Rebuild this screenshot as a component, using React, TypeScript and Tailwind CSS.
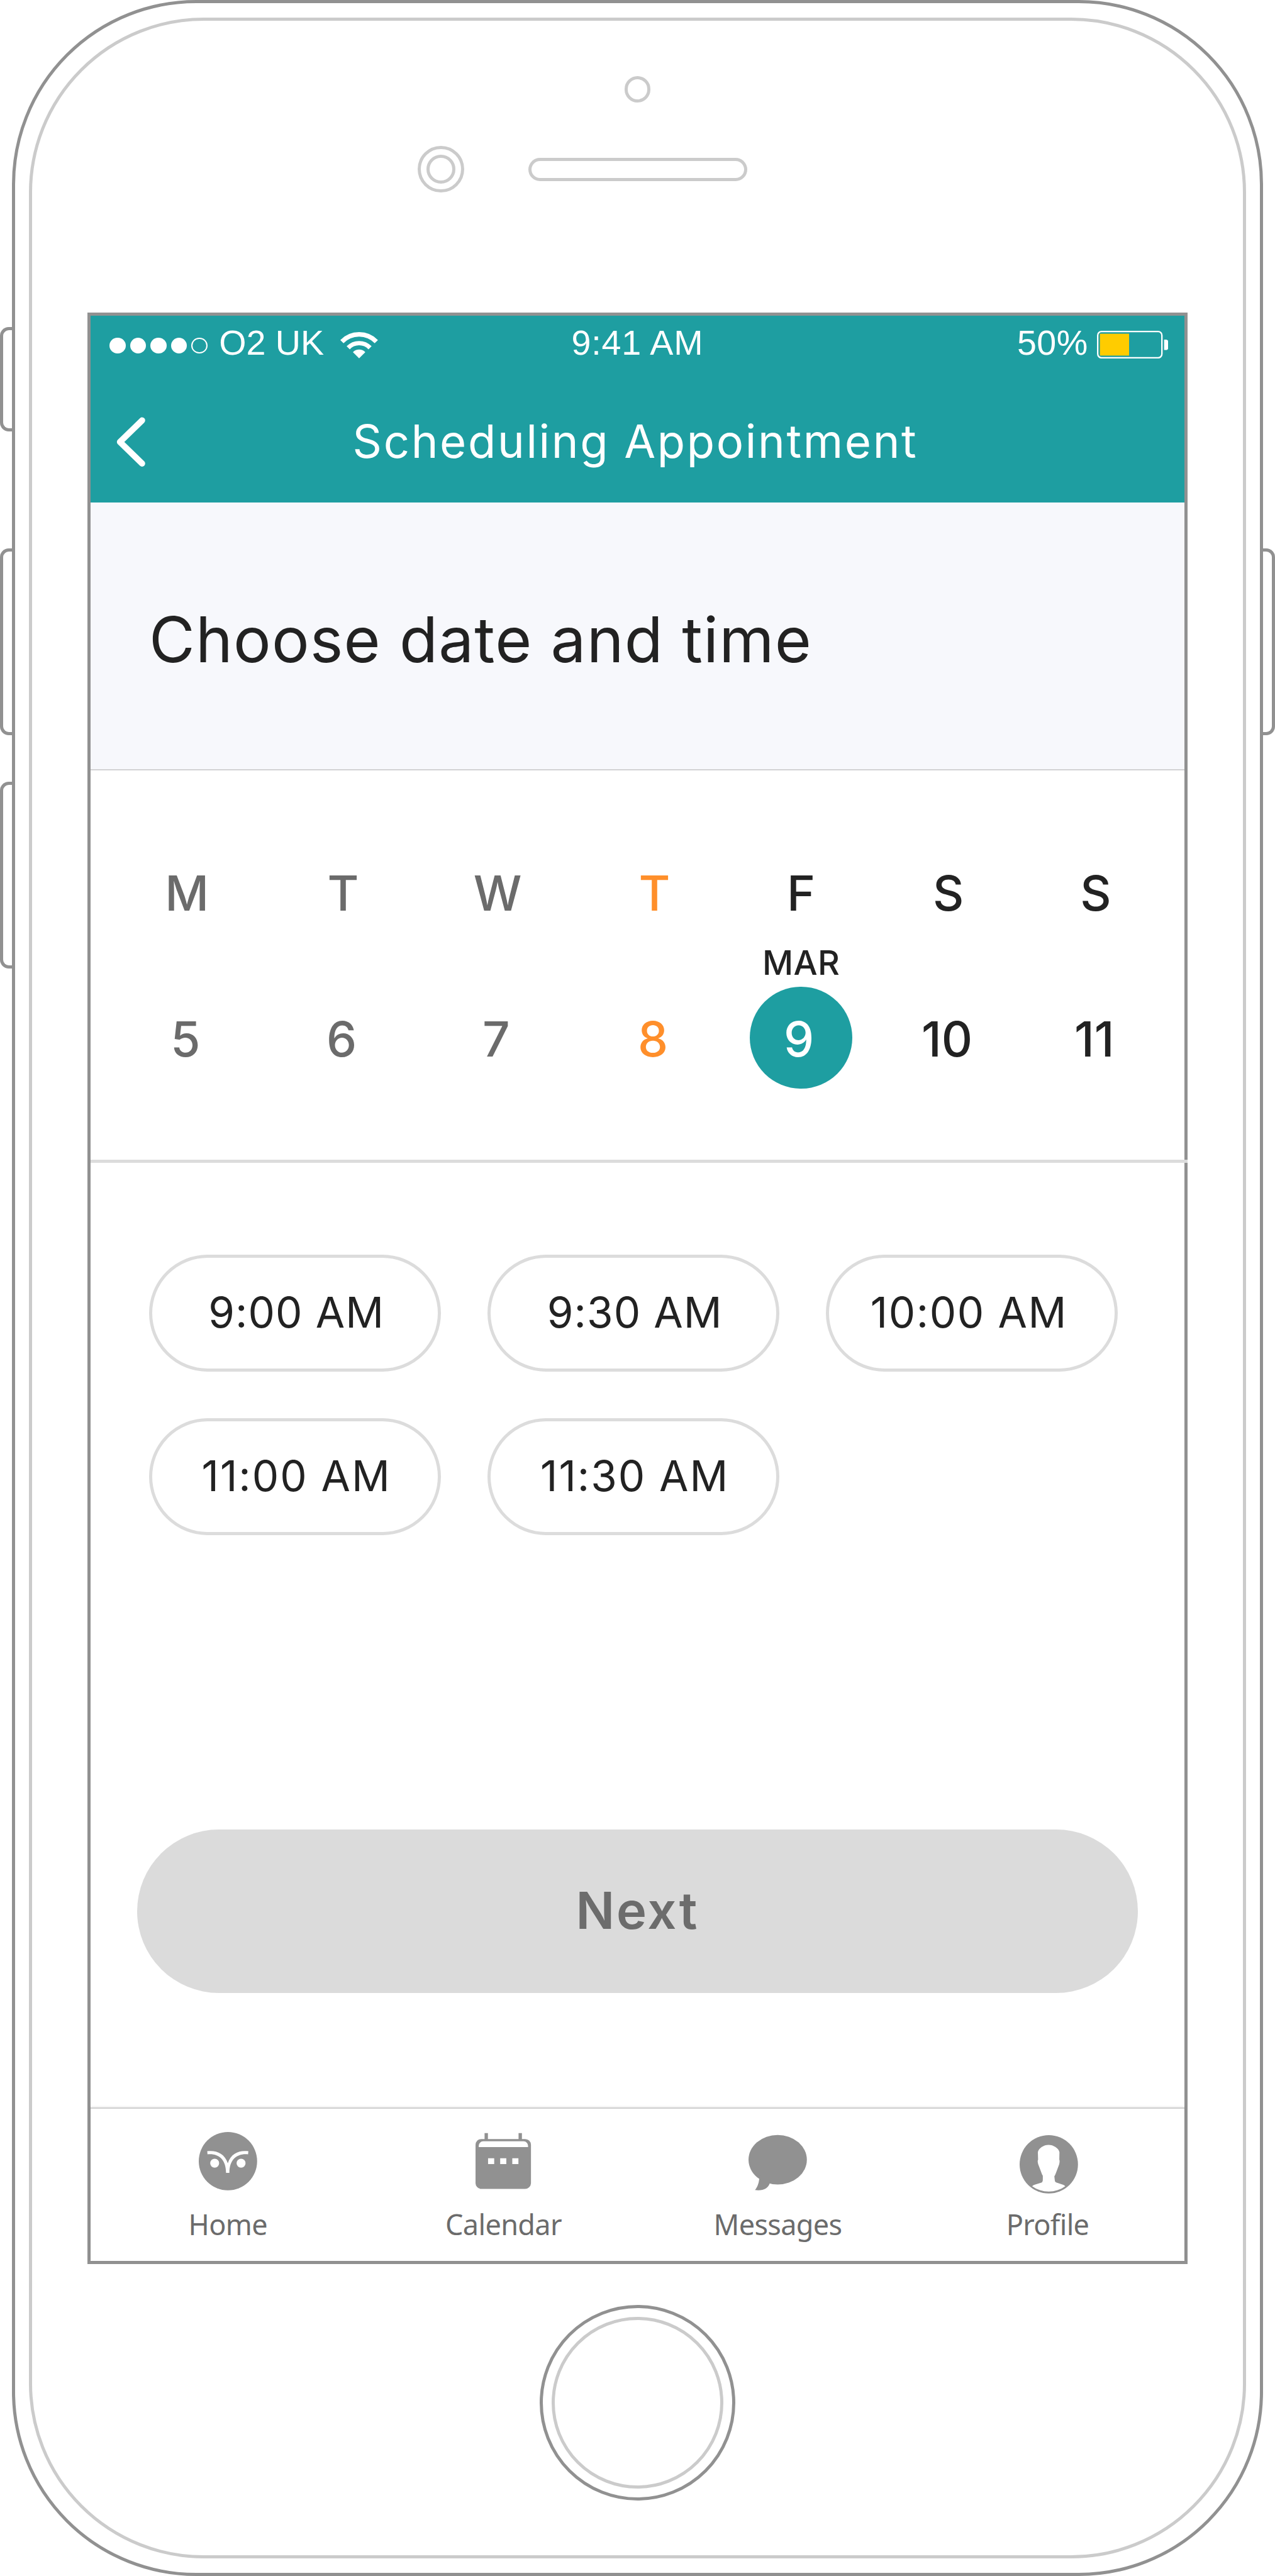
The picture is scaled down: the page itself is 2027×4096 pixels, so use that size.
import type { ReactNode } from "react";

// One spacing step equals one device point, so sizes below read as iOS points.

function SignalDots() {
  return (
    <div className="flex gap-1.5">
      {[0, 1, 2, 3].map((i) => (
        <span key={i} className="size-5.5 rounded-full bg-white" />
      ))}
      <span className="size-5.5 rounded-full border-2 border-white" />
    </div>
  );
}

function WifiIcon() {
  return (
    <svg className="h-9 w-13" viewBox="0 0 13 9" fill="none">
      <path d="M.55 3.3A8.2 8.2 0 0 1 12.35 3.3" stroke="#fff" strokeWidth="1.55" />
      <path d="M2.71 5.39A5.2 5.2 0 0 1 10.19 5.39" stroke="#fff" strokeWidth="1.5" />
      <path d="M6.45 9L4.33 6.9A2.95 2.95 0 0 1 8.57 6.9Z" fill="#fff" />
    </svg>
  );
}

function BatteryIcon() {
  return (
    <svg className="h-9.5 w-24.5" viewBox="0 0 24.5 9.5" fill="none">
      <rect x=".25" y=".25" width="22" height="9" rx="1.3" stroke="#fff" strokeWidth=".5" />
      <rect x="1" y="1" width="10" height="7.5" fill="#fc0" />
      <path d="M23 3h.6a.9.9 0 0 1 .9.9v1.8a.9.9 0 0 1-.9.9H23Z" fill="#fff" />
    </svg>
  );
}

function OwlIcon() {
  return (
    <svg className="size-20" viewBox="0 0 20 20">
      <circle cx="10" cy="10" r="10" fill="#919191" />
      <circle cx="5.45" cy="10.7" r="1.53" fill="#fff" />
      <circle cx="14.5" cy="10.7" r="1.53" fill="#fff" />
      <path
        fill="#fff"
        d="M2.9 6.6C5.8 6.2 8.8 7.2 9.95 10.7 11.1 7.2 14 6.2 17 6.6L16.9 7.65C13 7.3 10.5 9.5 10.5 14H9.35C9.35 9.5 6.9 7.3 3 7.65Z"
      />
    </svg>
  );
}

function CalendarIcon() {
  return (
    <svg className="h-20 w-19" viewBox="0 0 19 20" fill="#919191">
      <path d="M3.1.4h1.15v2.4H3.1zM14.75.4h1.15v2.4h-1.15z" />
      <rect y="2.4" width="19" height="17.1" rx="2" />
      <path fill="#fff" d="M1.1 5.2V4.7a1.5 1.5 0 0 1 1.5-1.5h13.9a1.5 1.5 0 0 1 1.5 1.5v.5z" />
      <path fill="#fff" d="M4.3 9h2.1v2H4.3zM8.45 9h2.1v2h-2.1zM12.6 9h2.1v2h-2.1z" />
    </svg>
  );
}

function MessageIcon() {
  return (
    <svg className="size-20" viewBox="0 0 20 20" fill="#919191">
      <ellipse cx="10" cy="9.5" rx="10" ry="8.5" />
      <path d="M3.7 15C3.75 17.2 3.1 18.8 2.2 19.9 4.9 20.3 6.8 19.3 7.3 17.5L8 14Z" />
    </svg>
  );
}

function ProfileIcon() {
  return (
    <svg className="mt-1 -mb-1 ml-1 size-20" viewBox="0 0 20 20">
      <circle cx="10" cy="10" r="10" fill="#919191" />
      <path
        fill="#fff"
        d="M9.93 3.35C8.3 3.35 6.6 4.4 6.25 5.8L6.33 8.4C6.15 8.7 6.15 9.1 6.35 9.9L7.55 13.1C7.7 13.5 7.75 13.6 7.95 13.9V15.2C7.95 15.9 7.8 16.2 7.3 16.35L5.2 17C4.8 17.15 4.5 17.3 4.3 17.5A9.55 9.55 0 0 0 15.65 17.5C15.4 17.3 15.2 17.15 14.8 17L12.7 16.3C12.3 16.15 12.1 16 12.05 15.4L11.9 14.1C12.1 13.8 12.2 13.6 12.4 13.1L13.55 10C13.75 9.2 13.75 8.7 13.6 8.4L13.65 5.8C13.3 4.4 11.5 3.35 9.93 3.35Z"
      />
    </svg>
  );
}

const days = [
  { id: "mon", letter: "M", date: "5", col: "w-52 text-[#6b6b6b]" },
  { id: "tue", letter: "T", date: "6", col: "w-55 text-[#6b6b6b]" },
  { id: "wed", letter: "W", date: "7", col: "w-51 text-[#6b6b6b]" },
  { id: "thu", letter: "T", date: "8", col: "w-56.5 text-[#ff8f2b]" },
  { id: "fri", letter: "F", date: "9", col: "w-44 text-[#222]", month: "MAR" },
  { id: "sat", letter: "S", date: "10", col: "w-57 text-[#222]" },
  { id: "sun", letter: "S", date: "11", col: "w-44 text-[#222]" },
];

const slots = [
  { time: "9:00 AM", fit: "pl-1 tracking-[1.1px]" },
  { time: "9:30 AM", fit: "pl-1 tracking-[1.1px]" },
  { time: "10:00 AM", fit: "pr-2 tracking-[1.6px]" },
  { time: "11:00 AM", fit: "pl-1 tracking-[2px]" },
  { time: "11:30 AM", fit: "pl-1 tracking-[2px]" },
];

const tabs: { label: string; col: string; icon: ReactNode }[] = [
  { label: "Home", col: "w-94", icon: <OwlIcon /> },
  { label: "Calendar", col: "w-95", icon: <CalendarIcon /> },
  { label: "Messages", col: "w-93", icon: <MessageIcon /> },
  { label: "Profile", col: "w-92", icon: <ProfileIcon /> },
];

function StatusBar() {
  return (
    <div className="grid h-20 grid-cols-3 items-center pr-5.5 pb-1 pl-6.5 font-['Liberation_Sans',sans-serif] text-[55.66px] leading-none text-white">
      <div className="flex items-center">
        <div className="pt-1.5">
          <SignalDots />
        </div>
        <span className="ml-4 whitespace-nowrap">O2 UK</span>
        <span className="ml-5.5 pt-1.25">
          <WifiIcon />
        </span>
      </div>
      <span className="pr-1 text-center tracking-[0.8px] whitespace-nowrap">9:41 AM</span>
      <div className="flex items-center justify-end gap-3">
        <span className="tracking-[0.5px]">50%</span>
        <span className="pt-1">
          <BatteryIcon />
        </span>
      </div>
    </div>
  );
}

function NavBar() {
  return (
    <div className="grid h-44 grid-cols-[1fr_auto_1fr] items-center text-white">
      <button className="mt-2.5 ml-7.75 w-12" aria-label="Back">
        <svg className="h-18 w-12" viewBox="0 0 12 18" fill="none">
          <path d="M9.9 1.6L2.3 9L9.9 16.4" stroke="#fff" strokeWidth="2.1" strokeLinecap="round" strokeLinejoin="round" />
        </svg>
      </button>
      <h1 className="pt-2.5 pr-1.5 text-[72.4px] leading-none tracking-[2.65px] whitespace-nowrap">Scheduling Appointment</h1>
    </div>
  );
}

function Screen() {
  return (
    <main className="flex h-669 w-377 shrink-0 flex-col border-[5px] border-[#919191] bg-white">
      <header className="h-64 shrink-0 bg-[#1e9ea1]">
        <StatusBar />
        <NavBar />
      </header>

      <section className="flex h-92 shrink-0 items-center border-b-[2px] border-[#d2d2d4] bg-[#f7f8fc] pt-2.5 pl-20">
        <h2 className="text-[99.7px] leading-none tracking-[1.15px] whitespace-nowrap text-[#222]">Choose date and time</h2>
      </section>

      <section className="flex h-134.5 w-376 shrink-0 border-b-[5px] border-[#dcdcdc] pt-32 pl-7 text-[76.5px] font-medium">
        {days.map((d) => (
          <div key={d.id} className={`flex shrink-0 flex-col items-center ${d.col}`}>
            <span className="h-20 leading-[93px]">{d.letter}</span>
            <span className="mt-6.75 mb-1.25 h-14 text-[53.8px] leading-[65px] tracking-[0.4px]">{d.month}</span>
            {d.month ? (
              <span className="flex size-35 items-center justify-center rounded-full bg-[#1e9ea1] pt-1 pr-1.5 leading-none text-white">
                {d.date}
              </span>
            ) : (
              <span className="flex h-35 items-center pt-1 pr-1 leading-none">{d.date}</span>
            )}
          </div>
        ))}
      </section>

      <section className="mt-31.5 ml-20 grid w-332 shrink-0 grid-cols-3 gap-16">
        {slots.map((s) => (
          <button
            key={s.time}
            className={`h-40 w-100 rounded-full border-[5px] border-[#dcdcdc] pb-0.5 text-center text-[67.3px] leading-none whitespace-nowrap text-[#222] ${s.fit}`}
          >
            {s.time}
          </button>
        ))}
      </section>

      <div className="mt-101 flex shrink-0 justify-center">
        <button className="h-56 w-343 rounded-full bg-[#dbdbdb] pb-0.5 text-[81.2px] leading-none font-semibold tracking-[3px] text-[#6c6c6c]">
          Next
        </button>
      </div>

      <nav className="mt-auto flex h-52.5 shrink-0 border-t-[2px] border-[#cfcfcf] pt-8 shadow-[0_-1px_3px_rgba(0,0,0,0.1)]">
        {tabs.map((t) => (
          <div key={t.label} className={`flex shrink-0 flex-col items-center ${t.col}`}>
            {t.icon}
            <span className="mt-5.5 font-['Noto_Sans',sans-serif] text-[45px] leading-[56px] tracking-[-0.65px] text-[#6b6b6b]">
              {t.label}
            </span>
          </div>
        ))}
      </nav>
    </main>
  );
}

export default function App() {
  return (
    <div className="flex h-[4096px] w-[2027px] justify-center overflow-hidden bg-white font-['Inter',sans-serif] [--spacing:4.6384px]">
      <div className="flex w-4 shrink-0 flex-col pt-112">
        <div className="h-36 rounded-l-[14px] border-[5px] border-r-0 border-[#919191]" />
        <div className="mt-40 h-64 rounded-l-[14px] border-[5px] border-r-0 border-[#919191]" />
        <div className="mt-16 h-64 rounded-l-[14px] border-[5px] border-r-0 border-[#919191]" />
      </div>

      <div className="flex h-[4096px] w-429 shrink-0 rounded-[293px] border-[5px] border-[#919191] p-[22.8px]">
        <div className="flex flex-1 flex-col items-center rounded-[278px] border-[5px] border-[#cbcbcb]">
          <div className="flex h-[464px] w-full shrink-0 flex-col pt-19">
            <div className="size-9 self-center rounded-full border-[5px] border-[#cbcbcb]" />
            <div className="mt-15 flex items-center pl-132">
              <div className="size-16 rounded-full border-[5px] border-[#cbcbcb] p-[9px]">
                <div className="size-full rounded-full border-[5px] border-[#cbcbcb]" />
              </div>
              <div className="ml-22 h-8 w-75 rounded-full border-[5px] border-[#cbcbcb]" />
            </div>
          </div>
          <Screen />
          <div className="mt-14 size-67 shrink-0 rounded-full border-[5px] border-[#919191] p-3">
            <div className="size-full rounded-full border-[5px] border-[#cbcbcb]" />
          </div>
        </div>
      </div>

      <div className="w-4 shrink-0 pt-188">
        <div className="h-64 rounded-r-[14px] border-[5px] border-l-0 border-[#919191]" />
      </div>
    </div>
  );
}
